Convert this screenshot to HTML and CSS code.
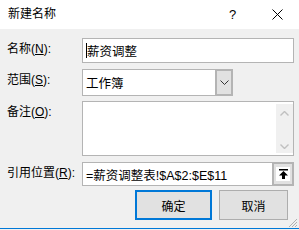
FILE: index.html
```html
<!DOCTYPE html>
<html>
<head>
<meta charset="utf-8">
<link rel="stylesheet" href="styles.css">
</head>
<body>
<div class="dialog">
  <div class="titlebar">
    <span class="title">新建名称</span>
    <span class="help">?</span>
    <span class="close">
      <svg width="11" height="11" viewBox="0 0 11 11"><path d="M0.5 0.5L10.5 10.5M10.5 0.5L0.5 10.5" stroke="#000" stroke-width="1" fill="none"/></svg>
    </span>
  </div>
  <div class="body">
    <div class="row r-name">
      <label class="lbl">名称(<u>N</u>):</label>
      <div class="box input"><span class="caret"></span>薪资调整</div>
    </div>
    <div class="row r-scope">
      <label class="lbl">范围(<u>S</u>):</label>
      <div class="box select">
        <span class="sel-text">工作簿</span>
        <span class="sel-btn">
          <svg width="9" height="5" viewBox="0 0 9 5"><path d="M0.5 0.5L4.5 4.5L8.5 0.5" stroke="#333" stroke-width="1" fill="none"/></svg>
        </span>
      </div>
    </div>
    <div class="row r-note">
      <label class="lbl">备注(<u>O</u>):</label>
      <div class="box textarea">
        <span class="ta-text"></span>
        <span class="scroll">
          <svg width="9" height="5" viewBox="0 0 9 5"><path d="M0.5 4.5L4.5 0.5L8.5 4.5" stroke="#c0c0c0" stroke-width="1.4" fill="none"/></svg>
          <svg width="9" height="5" viewBox="0 0 9 5"><path d="M0.5 0.5L4.5 4.5L8.5 0.5" stroke="#c0c0c0" stroke-width="1.4" fill="none"/></svg>
        </span>
      </div>
    </div>
    <div class="row r-ref">
      <label class="lbl">引用位置(<u>R</u>):</label>
      <div class="box refbox">
        <span class="ref-text">=薪资调整表!$A$2:$E$11</span>
        <span class="ref-btn">
          <span class="ref-icon">
            <svg width="11" height="11" viewBox="0 0 11 11"><rect x="1" y="0" width="9" height="1.5" fill="#000"/><path d="M5.5 2L10 6.5H7V10H4V6.5H1Z" fill="#000"/></svg>
          </span>
        </span>
      </div>
    </div>
    <div class="buttons">
      <button class="btn primary">确定</button>
      <button class="btn">取消</button>
    </div>
  </div>
  <div class="footer">
    <svg class="grip" width="10" height="10" viewBox="0 0 10 10">
      <path d="M9 1L1 9M9 4L4 9M9 7L7 9" stroke="#b0b0b0" stroke-width="1"/>
    </svg>
  </div>
</div>
</body>
</html>
```

FILE: styles.css
```css
* { box-sizing: border-box; }
html, body {
  margin: 0;
  padding: 0;
  width: 299px;
  height: 230px;
  overflow: hidden;
  background: #f0f0f0;
  font-family: "Liberation Sans", "Noto Sans CJK SC", sans-serif;
  font-size: 12px;
  color: #000;
}
.dialog {
  width: 299px;
  height: 230px;
  display: flex;
  flex-direction: column;
}
.titlebar {
  height: 29px;
  background: #fff;
  display: flex;
  align-items: center;
  padding-left: 8px;
}
.title {
  flex: 1;
  font-size: 12px;
  line-height: 16px;
  margin-top: -1px;
}
.help {
  font-family: "Liberation Sans", sans-serif;
  font-size: 13px;
  width: 14px;
  margin-right: 29px;
}
.close {
  display: flex;
  width: 22px;
  margin-right: 5px;
}
.body {
  flex: 1;
  padding: 9px 5px 0 7px;
  display: flex;
  flex-direction: column;
}
.row {
  display: flex;
  align-items: flex-start;
}
.lbl {
  width: 75px;
  line-height: 16px;
  padding-top: 3px;
  white-space: nowrap;
}
.lbl u { text-underline-offset: 1px; }
.box {
  flex: 1;
  background: #fff;
  border: 1px solid #b4b4b4;
}
.r-name .box { height: 25px; }
.input {
  display: flex;
  align-items: center;
  padding-left: 3px;
  font-size: 12.5px;
}
.caret {
  width: 1px;
  height: 15px;
  background: #000;
}
.r-scope { margin-top: 6px; }
.select {
  flex: 0 0 151px;
  height: 27px;
  display: flex;
  align-items: stretch;
}
.sel-text {
  flex: 1;
  padding-left: 3px;
  display: flex;
  align-items: center;
  font-size: 12.5px;
}
.sel-btn {
  width: 18px;
  margin: -1px -1px -1px 0;
  border: 2px solid #b4b4b4;
  background: #e1e1e1;
  display: flex;
  align-items: center;
  justify-content: center;
}
.r-note { margin-top: 5px; }
.textarea {
  height: 55px;
  display: flex;
}
.ta-text { flex: 1; }
.scroll {
  width: 17px;
  background: #f0f0f0;
  margin: 2px 0 2px 0;
  display: flex;
  flex-direction: column;
  justify-content: space-between;
  align-items: center;
  padding: 7px 0 4px;
}
.r-ref { margin-top: 6px; }
.refbox {
  height: 24px;
  display: flex;
}
.ref-text {
  flex: 1;
  display: flex;
  align-items: center;
  padding-left: 3px;
  font-size: 12.5px;
}
.ref-btn {
  width: 22px;
  margin: -1px -1px -1px 0;
  border: 2px solid #b4b4b4;
  background: #e1e1e1;
  display: flex;
  align-items: center;
  justify-content: center;
}
.ref-icon {
  width: 14px;
  height: 14px;
  background: #fff;
  display: flex;
  align-items: center;
  justify-content: center;
}
.buttons {
  margin-top: 4px;
  display: flex;
  padding-left: 128px;
  gap: 7px;
}
.btn {
  height: 30px;
  width: 69px;
  background: #e1e1e1;
  border: 1px solid #adadad;
  font-family: "Noto Sans CJK SC", sans-serif;
  font-size: 12px;
  color: #000;
  padding: 0;
}
.btn.primary {
  width: 77px;
  border: 2px solid #0078d7;
}
.footer {
  height: 3px;
  position: relative;
  border-bottom: 1px solid #0078d7;
  margin-bottom: 1px;
}
.grip {
  position: absolute;
  right: 1px;
  bottom: 0;
}
```
